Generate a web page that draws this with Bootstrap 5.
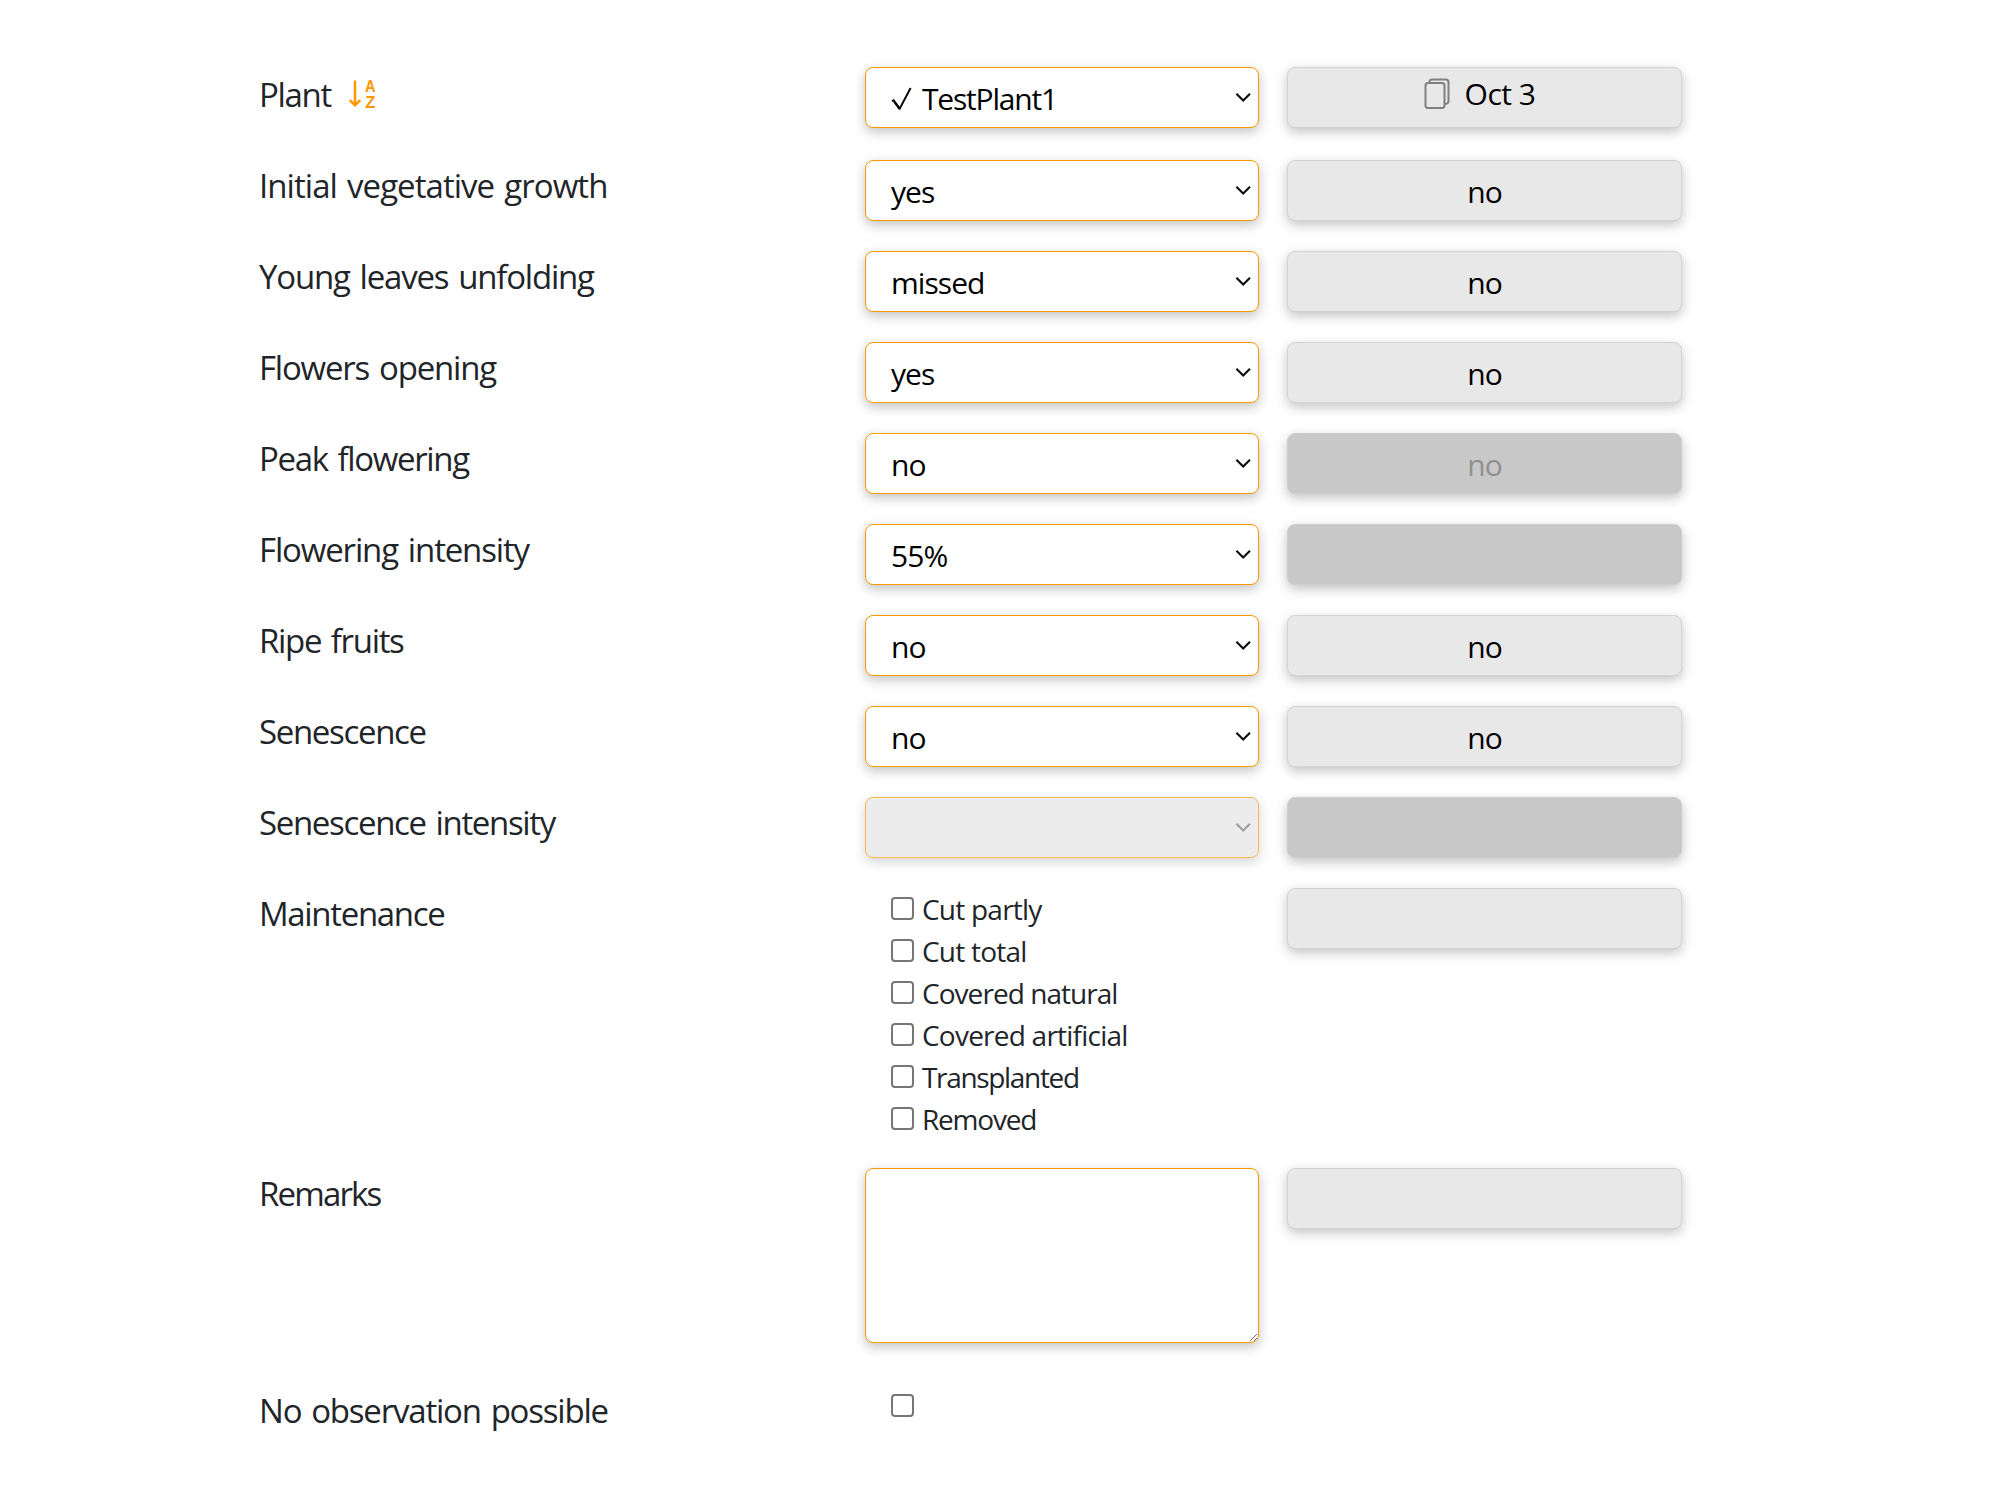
<!DOCTYPE html>
<html lang="en">
<head>
<meta charset="utf-8">
<title>Plant observations</title>
<link href="https://cdn.jsdelivr.net/npm/bootstrap@5.3.0/dist/css/bootstrap.min.css" rel="stylesheet">
<style>
body{font-family:"Open Sans","Noto Sans",sans-serif;background:#fff}
.obs-form{padding:67px 0 0 259px}
.obs-row{margin-bottom:30px}
.obs-row:first-child{margin-bottom:32px}
.obs-label{width:606px;padding-top:1px;font-size:33px;line-height:50px;letter-spacing:-1.15px;word-spacing:2.5px;white-space:nowrap}
.obs-row:first-child .obs-label{padding-top:3px;letter-spacing:-1.3px}
.sort-icon{margin-top:7px;overflow:visible}
.obs-input{width:394px;margin-right:28px}
.obs-past{width:395px}
.shade{box-shadow:0 4px 12px rgba(0,0,0,.24)}
.field,.past{height:61px;border-radius:8px;font-size:30px;letter-spacing:-.95px;line-height:57px;color:#000}
.field{padding:2px 30px 0 25px;border:1px solid #ff9800;background-color:#fff;background-size:17px 11px;background-position:right 6px top 24px;background-repeat:no-repeat;
background-image:url("data:image/svg+xml,%3Csvg xmlns='http://www.w3.org/2000/svg' viewBox='0 0 17 11'%3E%3Cpath d='M1.4 1.7 8.2 8.5 15 1.7' fill='none' stroke='%23101010' stroke-width='2.2'/%3E%3C/svg%3E")}
.field:disabled{background-color:#e4e4e4;opacity:.7;
background-image:url("data:image/svg+xml,%3Csvg xmlns='http://www.w3.org/2000/svg' viewBox='0 0 17 11'%3E%3Cpath d='M1.4 1.7 8.2 8.5 15 1.7' fill='none' stroke='%23777777' stroke-width='2.2'/%3E%3C/svg%3E")}
.plant-name{letter-spacing:-1.2px}
.past{border:1px solid #d3d3d3;background:#e8e8e8;text-align:center;padding-top:2px}
.past.locked{background:#c8c8c8;border-color:#cecece;color:#909090}
.past.date{line-height:47px;letter-spacing:-.5px;padding-right:12px}
textarea.remark{height:175px;resize:both;background-image:none}
.option-list{padding-left:26px;margin-bottom:-2px}
.option-line{height:42px;font-size:28px;line-height:42px;letter-spacing:-.77px}
.box{appearance:none;width:23px;height:23px;border:2px solid #767676;border-radius:4px;background:#fff;margin:0 8px 1px 0;flex:none}
.box.solo{margin:9px 0 0 26px}
.last-row{margin-top:42px}
.t-95{letter-spacing:-.95px}.t-118{letter-spacing:-1.2px}.t-130{letter-spacing:-1.33px}.t-180{letter-spacing:-1.85px}
</style>
</head>
<body>
<main class="obs-form">
  <div class="obs-row d-flex align-items-start">
    <div class="obs-label d-flex">Plant
      <svg class="sort-icon ms-3" width="30" height="32" viewBox="0 0 30 32" fill="none" stroke="#ff9800" stroke-width="2.5"><path d="M8 3.500V28M2.700 23.200 8 28.200l5.300-5"/><g fill="#ff9800" stroke="none" font-family="Liberation Sans" font-weight="700" letter-spacing="0"><text x="18" y="14.500" font-size="16" textLength="10.500" lengthAdjust="spacingAndGlyphs">A</text><text x="18.200" y="30.500" font-size="16.500" textLength="10.200" lengthAdjust="spacingAndGlyphs">Z</text></g></svg>
    </div>
    <div class="obs-input"><div class="form-select field shade d-flex">
      <svg width="31" height="57" viewBox="0 0 31 57" fill="none" stroke="#000"><path d="M1 31.200 2.700 30.200 8.800 38.500 19.600 18" stroke-width="1.900"/><path d="M2.700 31.500 8.200 39" stroke-width="1.400"/></svg><span class="plant-name">TestPlant1</span></div></div>
    <div class="obs-past"><div class="past date shade d-flex justify-content-center">
      <svg width="43" height="47" viewBox="-1.500 0 43 47" fill="none" stroke="#808080" stroke-width="2"><rect x="2" y="13" width="19" height="25" rx="2.500"/><path d="M6 13v-1Q6 9.500 8.500 9.500H22.500Q25 9.500 25 12V31Q25 34 21 34"/></svg><span>Oct 3</span></div></div>
  </div>
  <div class="obs-row d-flex align-items-start">
    <label class="obs-label t-95">Initial vegetative growth</label>
    <div class="obs-input"><select class="form-select field shade"><option>yes</option></select></div>
    <div class="obs-past"><div class="past shade">no</div></div>
  </div>
  <div class="obs-row d-flex align-items-start">
    <label class="obs-label t-118">Young leaves unfolding</label>
    <div class="obs-input"><select class="form-select field shade"><option>missed</option></select></div>
    <div class="obs-past"><div class="past shade">no</div></div>
  </div>
  <div class="obs-row d-flex align-items-start">
    <label class="obs-label t-118">Flowers opening</label>
    <div class="obs-input"><select class="form-select field shade"><option>yes</option></select></div>
    <div class="obs-past"><div class="past shade">no</div></div>
  </div>
  <div class="obs-row d-flex align-items-start">
    <label class="obs-label t-130">Peak flowering</label>
    <div class="obs-input"><select class="form-select field shade"><option>no</option></select></div>
    <div class="obs-past"><div class="past locked shade">no</div></div>
  </div>
  <div class="obs-row d-flex align-items-start">
    <label class="obs-label">Flowering intensity</label>
    <div class="obs-input"><select class="form-select field shade"><option>55%</option></select></div>
    <div class="obs-past"><div class="past locked shade"></div></div>
  </div>
  <div class="obs-row d-flex align-items-start">
    <label class="obs-label t-130">Ripe fruits</label>
    <div class="obs-input"><select class="form-select field shade"><option>no</option></select></div>
    <div class="obs-past"><div class="past shade">no</div></div>
  </div>
  <div class="obs-row d-flex align-items-start">
    <label class="obs-label t-130">Senescence</label>
    <div class="obs-input"><select class="form-select field shade"><option>no</option></select></div>
    <div class="obs-past"><div class="past shade">no</div></div>
  </div>
  <div class="obs-row d-flex align-items-start">
    <label class="obs-label t-130">Senescence intensity</label>
    <div class="obs-input"><select class="form-select field shade" disabled><option></option></select></div>
    <div class="obs-past"><div class="past locked shade"></div></div>
  </div>
  <div class="obs-row d-flex align-items-start">
    <div class="obs-label t-130">Maintenance</div>
    <div class="obs-input option-list">
      <label class="option-line d-flex align-items-center"><input type="checkbox" class="box">Cut partly</label>
      <label class="option-line d-flex align-items-center"><input type="checkbox" class="box">Cut total</label>
      <label class="option-line d-flex align-items-center t-95"><input type="checkbox" class="box">Covered natural</label>
      <label class="option-line d-flex align-items-center"><input type="checkbox" class="box">Covered artificial</label>
      <label class="option-line d-flex align-items-center t-130"><input type="checkbox" class="box">Transplanted</label>
      <label class="option-line d-flex align-items-center t-118"><input type="checkbox" class="box">Removed</label>
    </div>
    <div class="obs-past"><div class="past shade"></div></div>
  </div>
  <div class="obs-row d-flex align-items-start mb-0">
    <label class="obs-label t-180">Remarks</label>
    <div class="obs-input"><textarea class="form-control field remark shade d-block"></textarea></div>
    <div class="obs-past"><div class="past shade"></div></div>
  </div>
  <div class="obs-row last-row d-flex align-items-start mb-0">
    <label class="obs-label t-118">No observation possible</label>
    <div class="obs-input"><input type="checkbox" class="box solo d-block"></div>
  </div>
</main>
<script src="https://cdn.jsdelivr.net/npm/bootstrap@5.3.0/dist/js/bootstrap.bundle.min.js"></script>
</body>
</html>
